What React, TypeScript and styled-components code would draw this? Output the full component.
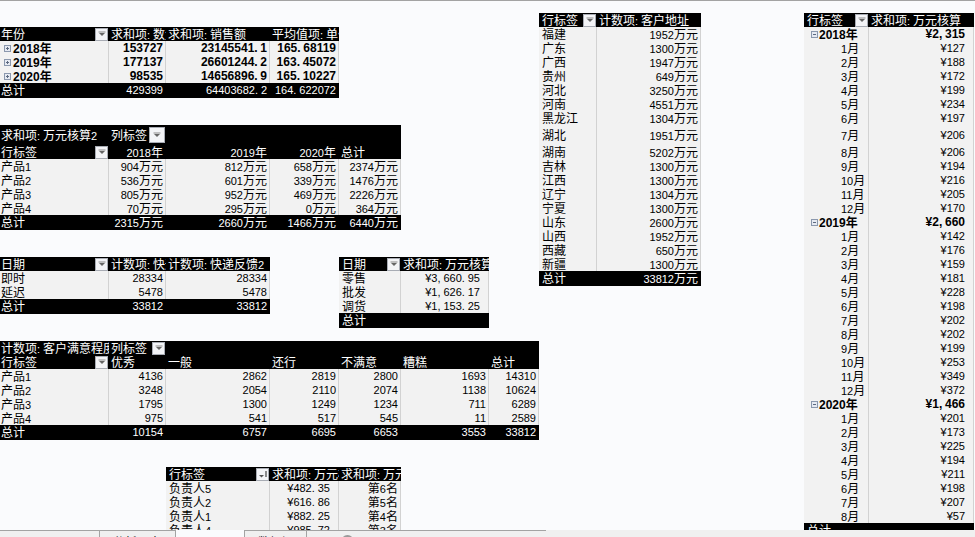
import React from 'react'
import styled, { createGlobalStyle, css } from 'styled-components'

const GlobalStyle = createGlobalStyle`
  html, body {
    margin: 0;
    overflow: hidden;
    background: #fafbfd;
  }
`

const Window = styled.div`
  width: 975px;
  height: 537px;
  overflow: hidden;
  font-family: 'Liberation Sans', Arial, sans-serif;
  font-size: 11px;
  line-height: 14px;
  color: #000;
`

// the worksheet: every pivot table sits on the same columns and rows
const Sheet = styled.div`
  display: grid;
  grid-template-columns: 109px 57px 104px 69px 62px 88px 50px 58px 104px 103px 65px 105px 1fr;
  grid-template-rows: 12px repeat(8, 14px) 20px repeat(28, 14px);
  height: 529px;
  overflow: hidden;
  border-top: 1px solid #a3a3a3;
`

const Pivot = styled.div<{ $col: string; $row: string; $flush?: boolean }>`
  grid-column: ${(p) => p.$col};
  grid-row: ${(p) => p.$row};
  display: grid;
  grid-template-columns: subgrid;
  grid-template-rows: subgrid;
  --label-pad: ${(p) => (p.$flush ? '1px' : '3px')};
`

const cell = css`
  display: flex;
  align-items: center;
  min-width: 0;
  overflow: hidden;
  white-space: nowrap;
  box-sizing: border-box;
`

const HeadCell = styled.div<{ $right?: boolean; $first?: boolean }>`
  ${cell};
  justify-content: ${(p) => (p.$right ? 'flex-end' : 'flex-start')};
  padding-left: ${(p) => (p.$first ? 'var(--label-pad)' : '2px')};
  padding-right: ${(p) => (p.$right ? '3px' : '0')};
  background: #000;
  color: #fff;
`

const RowLabel = styled.div<{ $indent?: number }>`
  ${cell};
  padding-left: ${(p) => (p.$indent !== undefined ? `${p.$indent}px` : 'var(--label-pad)')};
  background: #f2f2f2;
  border-right: 1px solid #d2d2d2;
`

const ValueCell = styled.div<{ $inset?: boolean; $bold?: boolean }>`
  ${cell};
  justify-content: flex-end;
  padding-right: ${(p) => (p.$inset ? '8px' : '2px')};
  background: #f2f2f2;
  border-right: 1px solid #d2d2d2;
  font-size: ${(p) => (p.$bold ? '12px' : '11px')};
  font-weight: ${(p) => (p.$bold ? 700 : 400)};
`

const TotalCell = styled.div<{ $label?: boolean }>`
  ${cell};
  justify-content: ${(p) => (p.$label ? 'flex-start' : 'flex-end')};
  padding: ${(p) => (p.$label ? '0 0 0 var(--label-pad)' : '0 3px 0 0')};
  background: #000;
  color: #fff;
  box-shadow: 0 1px 0 #000;
`

const YearLabel = styled.span`
  flex: none;
  font-size: 12px;
  font-weight: 700;
`

const Han = styled.span`
  font-family: 'Noto Sans CJK SC', 'Liberation Sans', sans-serif;
  font-size: 12px;
`

const Separator = styled.span`
  display: inline-block;
  width: 6px;
`

const Run = styled.span`
  flex: none;
`

const FilterBox = styled.span<{ $size: number }>`
  flex: none;
  display: flex;
  align-items: center;
  justify-content: center;
  width: ${(p) => p.$size}px;
  height: ${(p) => p.$size}px;
  margin-left: auto;
  margin-right: 1px;
  box-sizing: border-box;
  background: #f3f4f7;
  border: 1px solid #a8acb4;
`

const ToggleBox = styled.svg<{ $gap: number }>`
  flex: none;
  width: 7px;
  height: 7px;
  margin-right: ${(p) => p.$gap}px;
`

const TabBar = styled.div`
  display: flex;
  height: 7px;
  overflow: hidden;
  background: #f0f0f0;
  font-size: 12px;
`

const Tab = styled.div<{ $width: number }>`
  flex: none;
  width: ${(p) => p.$width}px;
  box-sizing: border-box;
  padding: 4px 0 0 13px;
  border-top: 1px solid #a3a3a3;
  border-right: 1px solid #a3a3a3;
  overflow: hidden;
`

const ActiveTab = styled.div`
  flex: none;
  width: 69px;
  box-sizing: border-box;
  background: #fafbfd;
  border-right: 1px solid #a3a3a3;
`

const TabRest = styled.div`
  flex: none;
  width: 239px;
  box-sizing: border-box;
  padding: 4px 0 0 34px;
  border-top: 1px solid #a3a3a3;
`

const AddSheet = styled.span`
  display: block;
  width: 13px;
  height: 13px;
  box-sizing: border-box;
  border: 2px solid #9a9a9a;
  border-radius: 50%;
`

// Chinese runs are a size up from the digits, and separators take a half-em
const Text: React.FC<{ children: string }> = ({ children }) => (
  <Run>
    {children.split(/([\u4e00-\u9fff]+|[.,:])/).map((part, i) => {
      if (/^[\u4e00-\u9fff]/.test(part)) return <Han key={i}>{part}</Han>
      if (/^[.,:]$/.test(part)) return <Separator key={i}>{part}</Separator>
      return part
    })}
  </Run>
)

const Filter: React.FC<{ size?: number; sorted?: boolean }> = ({ size = 13, sorted }) => (
  <FilterBox $size={size}>
    <svg width="10" height="8" viewBox="0 0 10 8">
      {sorted ? (
        <>
          <path d="M1 5h5L3.5 7.5z" fill="#555" />
          <path d="M8 1v6" stroke="#444" strokeWidth="1.2" />
        </>
      ) : (
        <>
          <path d="M1.5 2h7" stroke="#8a8a8a" strokeWidth="1" />
          <path d="M2 3h6L5 6z" fill="#666" />
        </>
      )}
    </svg>
  </FilterBox>
)

const Toggle: React.FC<{ plus?: boolean; gap: number }> = ({ plus, gap }) => (
  <ToggleBox $gap={gap} viewBox="0 0 7 7">
    <rect x="0.5" y="0.5" width="6" height="6" fill="#e6eaf2" stroke="#8b98ad" />
    <path d={plus ? 'M2 3.5h3M3.5 2v3' : 'M2 3.5h3'} stroke="#5d6a80" />
  </ToggleBox>
)

const Head: React.FC<{ cells: string[]; sorted?: boolean }> = ({ cells, sorted }) => (
  <>
    <HeadCell $first>
      <Text>{cells[0]}</Text>
      <Filter sorted={sorted} />
    </HeadCell>
    {cells.slice(1).map((c, i) => (
      <HeadCell key={i}>
        <Text>{c}</Text>
      </HeadCell>
    ))}
  </>
)

const Body: React.FC<{ rows: string[][]; inset?: boolean[] }> = ({ rows, inset = [] }) => (
  <>
    {rows.map((row) => (
      <React.Fragment key={row[0]}>
        <RowLabel>
          <Text>{row[0]}</Text>
        </RowLabel>
        {row.slice(1).map((v, i) => (
          <ValueCell key={i} $inset={inset[i]}>
            <Text>{v}</Text>
          </ValueCell>
        ))}
      </React.Fragment>
    ))}
  </>
)

const Total: React.FC<{ cells: string[] }> = ({ cells }) => (
  <>
    <TotalCell $label>
      <Text>总计</Text>
    </TotalCell>
    {cells.map((c, i) => (
      <TotalCell key={i}>
        <Text>{c}</Text>
      </TotalCell>
    ))}
  </>
)

const yearRows = [
  ['2018年', '153727', '23145541.1', '165.68119'],
  ['2019年', '177137', '26601244.2', '163.45072'],
  ['2020年', '98535', '14656896.9', '165.10227'],
]

const productCore = [
  ['产品1', '904万元', '812万元', '658万元', '2374万元'],
  ['产品2', '536万元', '601万元', '339万元', '1476万元'],
  ['产品3', '805万元', '952万元', '469万元', '2226万元'],
  ['产品4', '70万元', '295万元', '0万元', '364万元'],
]

const satisfaction = [
  ['产品1', '4136', '2862', '2819', '2800', '1693', '14310'],
  ['产品2', '3248', '2054', '2110', '2074', '1138', '10624'],
  ['产品3', '1795', '1300', '1249', '1234', '711', '6289'],
  ['产品4', '975', '541', '517', '545', '11', '2589'],
]

const provinces = [
  ['福建', '1952万元'],
  ['广东', '1300万元'],
  ['广西', '1947万元'],
  ['贵州', '649万元'],
  ['河北', '3250万元'],
  ['河南', '4551万元'],
  ['黑龙江', '1304万元'],
  ['湖北', '1951万元'],
  ['湖南', '5202万元'],
  ['吉林', '1300万元'],
  ['江西', '1300万元'],
  ['辽宁', '1304万元'],
  ['宁夏', '1300万元'],
  ['山东', '2600万元'],
  ['山西', '1952万元'],
  ['西藏', '650万元'],
  ['新疆', '1300万元'],
]

const months = [
  { year: '2018年', total: '¥2,315', values: [127, 188, 172, 199, 234, 197, 206, 206, 194, 216, 205, 170] },
  { year: '2019年', total: '¥2,660', values: [142, 176, 159, 181, 228, 198, 202, 202, 199, 253, 349, 372] },
  { year: '2020年', total: '¥1,466', values: [201, 173, 225, 194, 211, 198, 207, 57] },
]

export default function App() {
  return (
    <Window>
      <GlobalStyle />
      <Sheet>
        <Pivot $col="1 / 5" $row="3 / 8" $flush>
          <Head cells={['年份', '求和项:数量', '求和项:销售额', '平均值项:单价']} />
          {yearRows.map((row) => (
            <React.Fragment key={row[0]}>
              <RowLabel $indent={4}>
                <Toggle plus gap={2} />
                <YearLabel>
                  <Text>{row[0]}</Text>
                </YearLabel>
              </RowLabel>
              {row.slice(1).map((v) => (
                <ValueCell key={v} $bold>
                  <Text>{v}</Text>
                </ValueCell>
              ))}
            </React.Fragment>
          ))}
          <Total cells={['429399', '64403682.2', '164.622072']} />
        </Pivot>

        <Pivot $col="1 / 6" $row="10 / 17" $flush>
          <HeadCell $first>
            <Text>求和项:万元核算2</Text>
          </HeadCell>
          <HeadCell>
            <Text>列标签</Text>
            <Filter size={16} />
          </HeadCell>
          <HeadCell />
          <HeadCell />
          <HeadCell />
          <HeadCell $first>
            <Text>行标签</Text>
            <Filter />
          </HeadCell>
          <HeadCell $right>
            <Text>2018年</Text>
          </HeadCell>
          <HeadCell $right>
            <Text>2019年</Text>
          </HeadCell>
          <HeadCell $right>
            <Text>2020年</Text>
          </HeadCell>
          <HeadCell>
            <Text>总计</Text>
          </HeadCell>
          <Body rows={productCore} />
          <Total cells={['2315万元', '2660万元', '1466万元', '6440万元']} />
        </Pivot>

        <Pivot $col="1 / 4" $row="19 / 23" $flush>
          <Head cells={['日期', '计数项:快递反馈', '计数项:快递反馈2']} />
          <Body
            rows={[
              ['即时', '28334', '28334'],
              ['延迟', '5478', '5478'],
            ]}
          />
          <Total cells={['33812', '33812']} />
        </Pivot>

        <Pivot $col="5 / 7" $row="19 / 24">
          <Head cells={['日期', '求和项:万元核算']} />
          <Body
            rows={[
              ['零售', '¥3,660.95'],
              ['批发', '¥1,626.17'],
              ['调货', '¥1,153.25'],
            ]}
            inset={[true]}
          />
          <Total cells={['']} />
        </Pivot>

        <Pivot $col="1 / 8" $row="25 / 32" $flush>
          <HeadCell $first>
            <Text>计数项:客户满意程度</Text>
          </HeadCell>
          <HeadCell>
            <Text>列标签</Text>
            <Filter />
          </HeadCell>
          <HeadCell />
          <HeadCell />
          <HeadCell />
          <HeadCell />
          <HeadCell />
          <Head cells={['行标签', '优秀', '一般', '还行', '不满意', '糟糕', '总计']} />
          <Body rows={satisfaction} />
          <Total cells={['10154', '6757', '6695', '6653', '3553', '33812']} />
        </Pivot>

        <Pivot $col="3 / 6" $row="34 / 39">
          <Head sorted cells={['行标签', '求和项:万元核算', '求和项:万元核算2']} />
          <Body
            rows={[
              ['负责人5', '¥482.35', '第6名'],
              ['负责人2', '¥616.86', '第5名'],
              ['负责人1', '¥882.25', '第4名'],
              ['负责人4', '¥985.72', '第3名'],
            ]}
            inset={[true, false]}
          />
        </Pivot>

        <Pivot $col="8 / 10" $row="2 / 21">
          <Head cells={['行标签', '计数项:客户地址']} />
          <Body rows={provinces} />
          <Total cells={['33812万元']} />
        </Pivot>

        <Pivot $col="11 / 13" $row="2 / 39">
          <Head cells={['行标签', '求和项:万元核算']} />
          {months.map((group) => (
            <React.Fragment key={group.year}>
              <RowLabel $indent={7}>
                <Toggle gap={1} />
                <YearLabel>
                  <Text>{group.year}</Text>
                </YearLabel>
              </RowLabel>
              <ValueCell $inset $bold>
                <Text>{group.total}</Text>
              </ValueCell>
              {group.values.map((v, i) => (
                <React.Fragment key={i}>
                  <RowLabel $indent={37}>
                    <Text>{`${i + 1}月`}</Text>
                  </RowLabel>
                  <ValueCell $inset>
                    <Text>{`¥${v}`}</Text>
                  </ValueCell>
                </React.Fragment>
              ))}
            </React.Fragment>
          ))}
          <Total cells={['']} />
        </Pivot>
      </Sheet>

      <TabBar>
        <Tab $width={100} />
        <Tab $width={76}>
          <Text>分析图表</Text>
        </Tab>
        <ActiveTab />
        <Tab $width={62}>
          <Text>数据源</Text>
        </Tab>
        <TabRest>
          <AddSheet />
        </TabRest>
      </TabBar>
    </Window>
  )
}
